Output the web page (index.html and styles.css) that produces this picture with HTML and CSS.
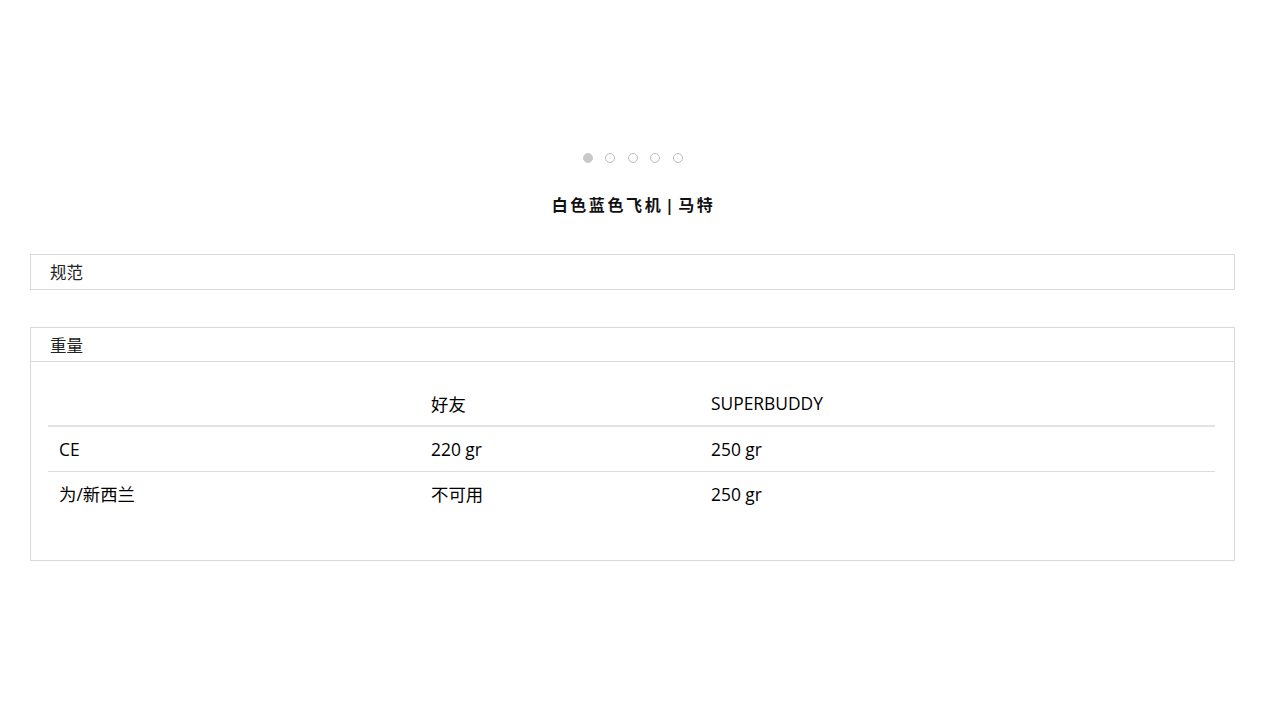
FILE: index.html
```html
<!DOCTYPE html>
<html lang="zh">
<head>
<meta charset="utf-8">
<link rel="stylesheet" href="styles.css">
</head>
<body>
<div class="page">
  <div class="dots">
    <span class="dot active"></span>
    <span class="dot"></span>
    <span class="dot"></span>
    <span class="dot"></span>
    <span class="dot"></span>
  </div>
  <h1 class="title">白色蓝色飞机 | 马特</h1>
  <div class="panel">
    <div class="panel-head">规范</div>
  </div>
  <div class="panel panel-weight">
    <div class="panel-head">重量</div>
    <div class="panel-body">
      <table class="spec">
        <thead>
          <tr><th class="c1"></th><th class="c2">好友</th><th class="c3">SUPERBUDDY</th></tr>
        </thead>
        <tbody>
          <tr><td>CE</td><td>220 gr</td><td>250 gr</td></tr>
          <tr><td>为/新西兰</td><td>不可用</td><td>250 gr</td></tr>
        </tbody>
      </table>
    </div>
  </div>
</div>
</body>
</html>
```
FILE: styles.css
```css
* { box-sizing: border-box; }
html, body { margin: 0; padding: 0; background: #fff; }
body {
  font-family: "Open Sans", "Noto Sans CJK SC", sans-serif;
  color: #111;
}
.page {
  padding: 153px 45px 0 30px;
}
.dots {
  display: flex;
  justify-content: center;
  gap: 12.5px;
}
.dot {
  width: 10px;
  height: 10px;
  border-radius: 50%;
  border: 1px solid #bdbdbd;
  background: #fff;
}
.dot.active {
  background: #c8c8c8;
  border-color: #c8c8c8;
}
.title {
  margin: 30px 0 0;
  text-align: center;
  font-size: 16px;
  font-weight: 700;
  letter-spacing: 2.6px;
  word-spacing: -5px;
  line-height: 24px;
  color: #111;
  padding-left: 2px;
}
.panel {
  border: 1px solid #d9d9d9;
  margin-top: 37px;
}
.panel-head {
  height: 34px;
  line-height: 34px;
  padding-left: 19px;
  font-size: 16.5px;
  color: #222;
  font-family: "Noto Sans CJK SC", sans-serif;
}
.panel-weight .panel-head {
  border-bottom: 1px solid #d9d9d9;
}
.panel-body {
  padding: 19px 19px 44px 17px;
}
.spec {
  width: 100%;
  border-collapse: collapse;
  font-size: 17.4px;
}
.spec th, .spec td {
  text-align: left;
  font-weight: 400;
  padding: 0 11px;
  height: 45px;
  color: #000;
}
.spec th { border-bottom: 2px solid #e2e2e2; }
.spec tbody tr:first-child td { border-bottom: 1px solid #dcdcdc; }
.spec .c1 { width: 372px; }
.spec .c2 { width: 280px; }
```
